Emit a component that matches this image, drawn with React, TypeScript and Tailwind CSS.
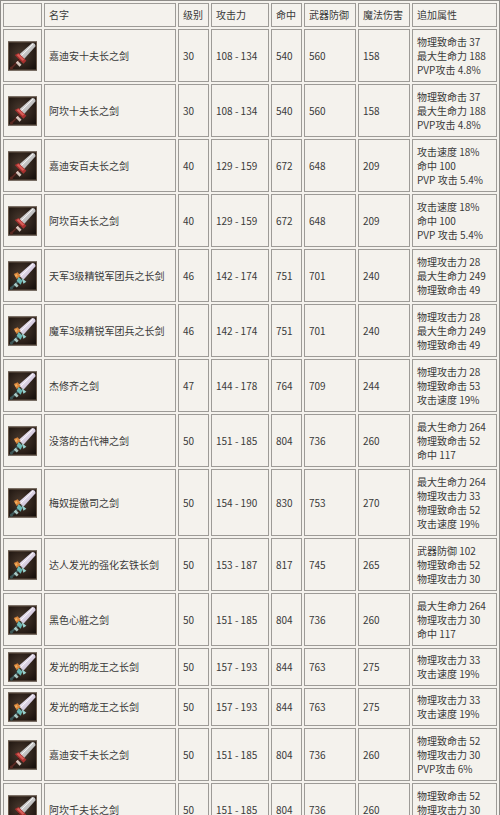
import React from "react";

type Row = {
  name: string;
  lvl: string;
  atk: string;
  hit: string;
  def: string;
  mag: string;
  extra: string[];
  icon: "a" | "b";
};

const rows: Row[] = [
  { name: "嘉迪安十夫长之剑", lvl: "30", atk: "108 - 134", hit: "540", def: "560", mag: "158", extra: ["物理致命击 37", "最大生命力 188", "PVP攻击 4.8%"], icon: "a" },
  { name: "阿坎十夫长之剑", lvl: "30", atk: "108 - 134", hit: "540", def: "560", mag: "158", extra: ["物理致命击 37", "最大生命力 188", "PVP攻击 4.8%"], icon: "a" },
  { name: "嘉迪安百夫长之剑", lvl: "40", atk: "129 - 159", hit: "672", def: "648", mag: "209", extra: ["攻击速度 18%", "命中 100", "PVP 攻击 5.4%"], icon: "a" },
  { name: "阿坎百夫长之剑", lvl: "40", atk: "129 - 159", hit: "672", def: "648", mag: "209", extra: ["攻击速度 18%", "命中 100", "PVP 攻击 5.4%"], icon: "a" },
  { name: "天军3级精锐军团兵之长剑", lvl: "46", atk: "142 - 174", hit: "751", def: "701", mag: "240", extra: ["物理攻击力 28", "最大生命力 249", "物理致命击 49"], icon: "b" },
  { name: "魔军3级精锐军团兵之长剑", lvl: "46", atk: "142 - 174", hit: "751", def: "701", mag: "240", extra: ["物理攻击力 28", "最大生命力 249", "物理致命击 49"], icon: "b" },
  { name: "杰修齐之剑", lvl: "47", atk: "144 - 178", hit: "764", def: "709", mag: "244", extra: ["物理攻击力 28", "物理致命击 53", "攻击速度 19%"], icon: "b" },
  { name: "没落的古代神之剑", lvl: "50", atk: "151 - 185", hit: "804", def: "736", mag: "260", extra: ["最大生命力 264", "物理致命击 52", "命中 117"], icon: "b" },
  { name: "梅奴提傲司之剑", lvl: "50", atk: "154 - 190", hit: "830", def: "753", mag: "270", extra: ["最大生命力 264", "物理攻击力 33", "物理致命击 52", "攻击速度 19%"], icon: "b" },
  { name: "达人发光的强化玄铁长剑", lvl: "50", atk: "153 - 187", hit: "817", def: "745", mag: "265", extra: ["武器防御 102", "物理致命击 52", "物理攻击力 30"], icon: "b" },
  { name: "黑色心脏之剑", lvl: "50", atk: "151 - 185", hit: "804", def: "736", mag: "260", extra: ["最大生命力 264", "物理攻击力 30", "命中 117"], icon: "b" },
  { name: "发光的明龙王之长剑", lvl: "50", atk: "157 - 193", hit: "844", def: "763", mag: "275", extra: ["物理攻击力 33", "攻击速度 19%"], icon: "b" },
  { name: "发光的暗龙王之长剑", lvl: "50", atk: "157 - 193", hit: "844", def: "763", mag: "275", extra: ["物理攻击力 33", "攻击速度 19%"], icon: "b" },
  { name: "嘉迪安千夫长之剑", lvl: "50", atk: "151 - 185", hit: "804", def: "736", mag: "260", extra: ["物理致命击 52", "物理攻击力 30", "PVP攻击 6%"], icon: "a" },
  { name: "阿坎千夫长之剑", lvl: "50", atk: "151 - 185", hit: "804", def: "736", mag: "260", extra: ["物理致命击 52", "物理攻击力 30", "PVP攻击 6%"], icon: "a" },
];

function SwordIcon({ variant, id }: { variant: "a" | "b"; id: string }) {
  const a = variant === "a";
  return (
    <svg width="30" height="30" viewBox="0 0 30 30" className="block">
      <defs>
        <radialGradient id={`bg-${id}`} cx="0.45" cy="0.45" r="0.75">
          <stop offset="0" stopColor="#4a3b30" />
          <stop offset="0.6" stopColor="#2a1f18" />
          <stop offset="1" stopColor="#120c09" />
        </radialGradient>
        <linearGradient id={`bl-${id}`} x1="0" y1="0" x2="1" y2="1">
          <stop offset="0" stopColor={a ? "#f0f0f0" : "#f6f2fa"} />
          <stop offset="0.5" stopColor={a ? "#c8c8c8" : "#ddd4e6"} />
          <stop offset="1" stopColor={a ? "#8a8a8a" : "#a89cb4"} />
        </linearGradient>
      </defs>
      <rect x="0" y="0" width="30" height="30" fill={`url(#bg-${id})`} />
      <rect x="0.5" y="0.5" width="29" height="29" fill="none" stroke="#6b5a4c" strokeWidth="1" />
      {/* blade */}
      <path d="M25 1.5 Q28.5 1.5 28.5 5 L16 19 L11 14 Z" fill={`url(#bl-${id})`} />
      <path d="M26 2.5 L13 15.5" stroke="#ffffff" strokeWidth="1" opacity="0.8" />
      {/* grip */}
      <path d="M12 19 L4 27" stroke={a ? "#3a1c18" : "#2c3a3a"} strokeWidth="3" strokeLinecap="round" />
      <path d="M12 19 L4 27" stroke={a ? "#7a3a30" : "#5a8080"} strokeWidth="1" strokeLinecap="round" />
      {/* guard */}
      {a ? (
        <>
          <path d="M7 14 L11 12 L19 20 L16 23 Z" fill="#a8302e" />
          <path d="M9 14 L11 13 L17 19 L15 20 Z" fill="#d8605a" />
          <path d="M10 20 L14 24 L12 26 L8 22 Z" fill="#e8d8d0" opacity="0.9" />
        </>
      ) : (
        <>
          <path d="M6 13 L10 11 L13 15 L9 18 Z" fill="#d8843a" />
          <path d="M7 14 L9 13 L10 15 L8 16 Z" fill="#f0b060" />
          <path d="M11 16 L15 20 L13 24 L9 20 Z" fill="#6cb8b4" />
          <path d="M14 17 L19 21 L16 23 Z" fill="#9ad4d0" />
          <path d="M8 22 L11 25 L9 27 L6 24 Z" fill="#bfe0dc" opacity="0.85" />
        </>
      )}
      <circle cx="3.5" cy="27.5" r="1.6" fill={a ? "#5a2a22" : "#3c5656"} />
    </svg>
  );
}

const cell = "border border-[#9d9b97] px-[4px] py-0 align-middle text-left font-normal";

export default function App() {
  return (
    <div
      className="w-[500px] bg-[#f4f2ed] text-[#3a3a3a]"
      style={{ fontFamily: '"Noto Sans CJK SC", "Noto Sans", sans-serif' }}
    >
      <table className="w-[500px] table-fixed border-separate border-spacing-[2px] border border-[#8e8c88] bg-[#f4f2ed] text-[10px] leading-[14px]">
        <colgroup>
          <col className="w-[39px]" />
          <col className="w-[132px]" />
          <col className="w-[31px]" />
          <col className="w-[58px]" />
          <col className="w-[31px]" />
          <col className="w-[52px]" />
          <col className="w-[52px]" />
          <col className="w-[85px]" />
        </colgroup>
        <thead>
          <tr>
            <th className={`${cell} h-[24px]`}></th>
            <th className={cell}>名字</th>
            <th className={cell}>级别</th>
            <th className={cell}>攻击力</th>
            <th className={cell}>命中</th>
            <th className={cell}>武器防御</th>
            <th className={cell}>魔法伤害</th>
            <th className={cell}>追加属性</th>
          </tr>
        </thead>
        <tbody>
          {rows.map((r, i) => {
            const h =
              r.extra.length === 4 ? "h-[67px]" : r.extra.length === 2 ? "h-[38px]" : "h-[53px]";
            return (
              <tr key={i}>
                <td className={`${cell} ${h}`}>
                  <div className="flex justify-center">
                    <SwordIcon variant={r.icon} id={`r${i}`} />
                  </div>
                </td>
                <td className={cell}>{r.name}</td>
                <td className={cell}>{r.lvl}</td>
                <td className={cell}>{r.atk}</td>
                <td className={cell}>{r.hit}</td>
                <td className={cell}>{r.def}</td>
                <td className={cell}>{r.mag}</td>
                <td className={cell}>
                  {r.extra.map((e, j) => (
                    <div key={j} className="whitespace-nowrap">
                      {e}
                    </div>
                  ))}
                </td>
              </tr>
            );
          })}
        </tbody>
      </table>
    </div>
  );
}
